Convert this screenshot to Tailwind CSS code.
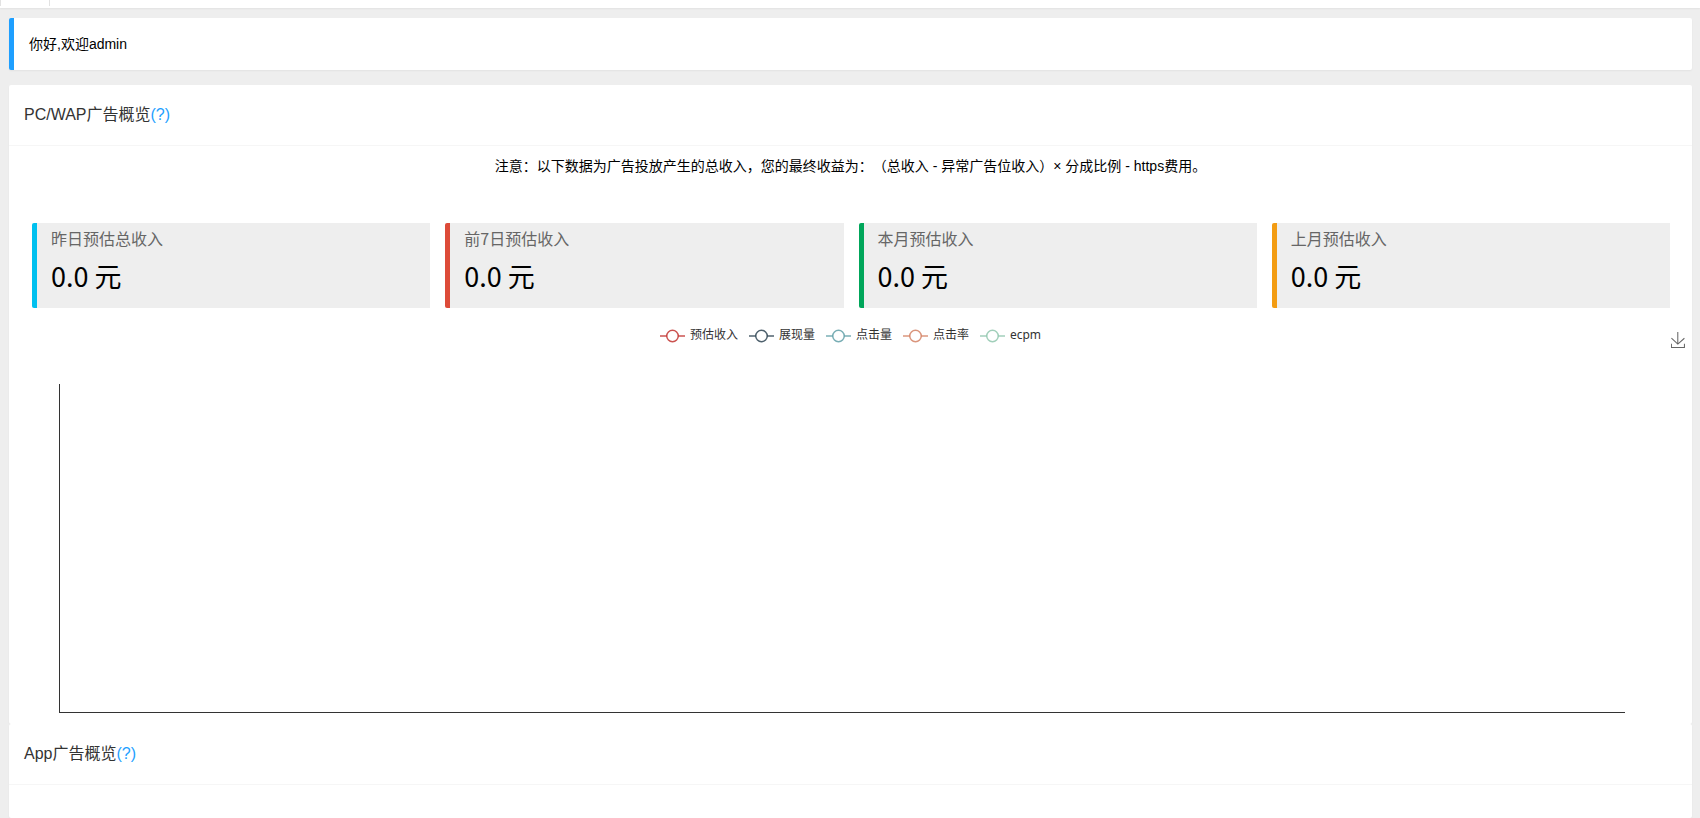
<!DOCTYPE html>
<html lang="zh-CN">
<head>
<meta charset="utf-8">
<title>广告概览</title>
<script src="https://cdn.jsdelivr.net/npm/@tailwindcss/browser@4"></script>
</head>
<body class="min-h-screen overflow-hidden bg-[#eee] font-['Liberation_Sans','Noto_Sans_CJK_SC',sans-serif] text-sm text-black">
<div class="flex min-h-screen flex-col">
  <nav class="flex h-2 bg-white shadow-[0_1px_2px_rgba(0,0,0,0.05)]">
    <div class="h-[6px] w-[50px] border-x border-[#e2e2e2]"></div>
  </nav>
  <main class="flex grow flex-col pt-[10px] pr-2 pl-[9px]">
    <p class="mb-[15px] rounded-xs border-l-5 border-[#1e9fff] bg-white px-[15px] py-4 leading-5 shadow-[0_1px_2px_rgba(0,0,0,0.05)]">你好,欢迎admin</p>

    <section class="rounded-xs bg-white shadow-[0_1px_2px_rgba(0,0,0,0.05)]">
      <h2 class="border-b border-[#f6f6f6] px-[15px] text-base leading-[60px] text-[#333]">PC/WAP广告概览<a href="#" class="text-[#1e9fff]">(?)</a></h2>
      <p class="pt-[10px] text-center leading-5 [text-spacing-trim:space-all]">注意：以下数据为广告投放产生的总收入，您的最终收益为：（总收入 - 异常广告位收入）× 分成比例 - https费用。</p>

      <div class="mt-[47px] mr-[22px] ml-[23px] grid grid-cols-4 gap-[15px]">
        <div class="h-[85px] rounded-l-xs border-l-5 border-[#00c0ef] bg-[#eee] pl-[14px] font-['Noto_Sans_CJK_SC',sans-serif]">
          <h3 class="pt-[3px] text-base leading-6 text-[#666]">昨日预估总收入</h3>
          <p class="mt-2 text-[27px] leading-9">0.0 元</p>
        </div>
        <div class="h-[85px] rounded-l-xs border-l-5 border-[#dd4b39] bg-[#eee] pl-[14px] font-['Noto_Sans_CJK_SC',sans-serif]">
          <h3 class="pt-[3px] text-base leading-6 text-[#666]">前7日预估收入</h3>
          <p class="mt-2 text-[27px] leading-9">0.0 元</p>
        </div>
        <div class="h-[85px] rounded-l-xs border-l-5 border-[#00a65a] bg-[#eee] pl-[14px] font-['Noto_Sans_CJK_SC',sans-serif]">
          <h3 class="pt-[3px] text-base leading-6 text-[#666]">本月预估收入</h3>
          <p class="mt-2 text-[27px] leading-9">0.0 元</p>
        </div>
        <div class="h-[85px] rounded-l-xs border-l-5 border-[#f39c12] bg-[#eee] pl-[14px] font-['Noto_Sans_CJK_SC',sans-serif]">
          <h3 class="pt-[3px] text-base leading-6 text-[#666]">上月预估收入</h3>
          <p class="mt-2 text-[27px] leading-9">0.0 元</p>
        </div>
      </div>

      <div class="relative pt-[19px] pb-[11px]">
        <ul class="flex h-4 justify-center gap-[11px] font-['Noto_Sans','Noto_Sans_CJK_SC',sans-serif] text-xs leading-4 text-[#333]">
          <li class="flex gap-[5px]"><svg class="mt-px h-4 w-[25px]" viewBox="0 0 25 16" stroke="#c23531" stroke-opacity=".85" stroke-width="1.5"><path d="M0 8H25"/><circle cx="12.5" cy="8" r="5.75" fill="#fff"/></svg>预估收入</li>
          <li class="flex gap-[5px]"><svg class="mt-px h-4 w-[25px]" viewBox="0 0 25 16" stroke="#2f4554" stroke-opacity=".85" stroke-width="1.5"><path d="M0 8H25"/><circle cx="12.5" cy="8" r="5.75" fill="#fff"/></svg>展现量</li>
          <li class="flex gap-[5px]"><svg class="mt-px h-4 w-[25px]" viewBox="0 0 25 16" stroke="#61a0a8" stroke-opacity=".85" stroke-width="1.5"><path d="M0 8H25"/><circle cx="12.5" cy="8" r="5.75" fill="#fff"/></svg>点击量</li>
          <li class="flex gap-[5px]"><svg class="mt-px h-4 w-[25px]" viewBox="0 0 25 16" stroke="#d48265" stroke-opacity=".85" stroke-width="1.5"><path d="M0 8H25"/><circle cx="12.5" cy="8" r="5.75" fill="#fff"/></svg>点击率</li>
          <li class="flex gap-[5px]"><svg class="mt-px h-4 w-[25px]" viewBox="0 0 25 16" stroke="#91c7ae" stroke-opacity=".85" stroke-width="1.5"><path d="M0 8H25"/><circle cx="12.5" cy="8" r="5.75" fill="#fff"/></svg>ecpm</li>
        </ul>
        <button type="button" aria-label="保存为图片" class="absolute top-6 right-[7px] cursor-pointer"><svg class="h-4 w-[14px]" viewBox="3 0 54 60" preserveAspectRatio="none" fill="none" stroke="#666" stroke-width="4"><path d="M4.7 22.9L29.3 45.5L54.7 23.4M4.6 43.6V58H54.8V43.6M29.2 45.1V0"/></svg></button>
        <div class="mt-[41px] mr-[67px] ml-[50px] h-[329px] border-b border-l border-[#333]"></div>
      </div>
    </section>

    <section class="grow rounded-xs bg-white shadow-[0_1px_2px_rgba(0,0,0,0.05)]">
      <h2 class="border-b border-[#f6f6f6] px-[15px] text-base leading-[60px] text-[#333]">App广告概览<a href="#" class="text-[#1e9fff]">(?)</a></h2>
    </section>
  </main>
</div>
</body>
</html>
